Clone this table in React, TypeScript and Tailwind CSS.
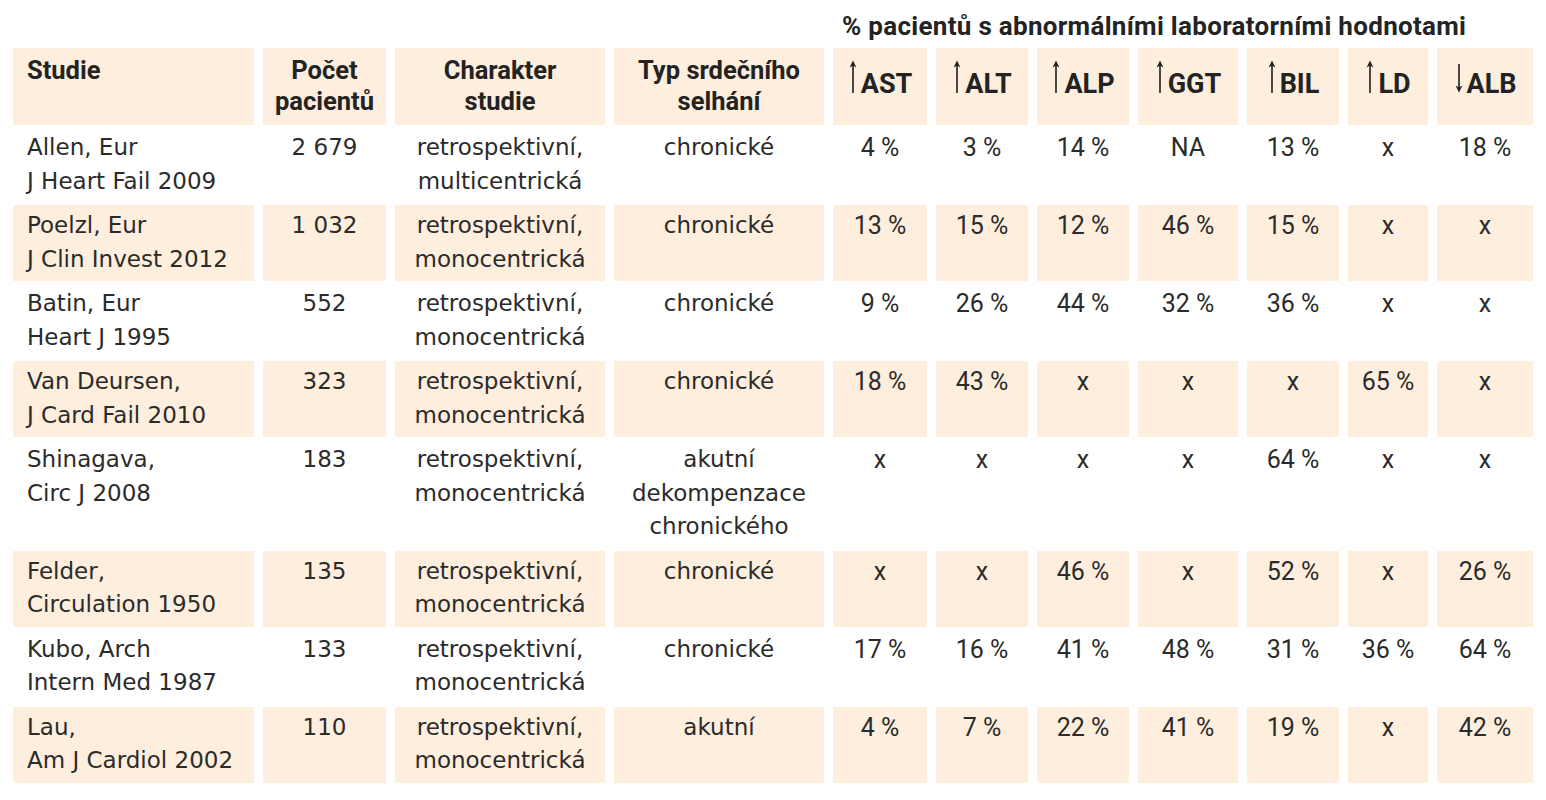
const body = "font-['DejaVu_Sans','Liberation_Sans',sans-serif]";
const narrow = "font-['Roboto','Liberation_Sans',sans-serif]";

type Row = {
  study: string[];
  count: string;
  kind: string[];
  type: string[];
  vals: string[];
};

const rows: Row[] = [
  { study: ['Allen, Eur', 'J Heart Fail 2009'], count: '2 679', kind: ['retrospektivní,', 'multicentrická'], type: ['chronické'], vals: ['4 %', '3 %', '14 %', 'NA', '13 %', 'x', '18 %'] },
  { study: ['Poelzl, Eur', 'J Clin Invest 2012'], count: '1 032', kind: ['retrospektivní,', 'monocentrická'], type: ['chronické'], vals: ['13 %', '15 %', '12 %', '46 %', '15 %', 'x', 'x'] },
  { study: ['Batin, Eur', 'Heart J 1995'], count: '552', kind: ['retrospektivní,', 'monocentrická'], type: ['chronické'], vals: ['9 %', '26 %', '44 %', '32 %', '36 %', 'x', 'x'] },
  { study: ['Van Deursen,', 'J Card Fail 2010'], count: '323', kind: ['retrospektivní,', 'monocentrická'], type: ['chronické'], vals: ['18 %', '43 %', 'x', 'x', 'x', '65 %', 'x'] },
  { study: ['Shinagava,', 'Circ J 2008'], count: '183', kind: ['retrospektivní,', 'monocentrická'], type: ['akutní', 'dekompenzace', 'chronického'], vals: ['x', 'x', 'x', 'x', '64 %', 'x', 'x'] },
  { study: ['Felder,', 'Circulation 1950'], count: '135', kind: ['retrospektivní,', 'monocentrická'], type: ['chronické'], vals: ['x', 'x', '46 %', 'x', '52 %', 'x', '26 %'] },
  { study: ['Kubo, Arch', 'Intern Med 1987'], count: '133', kind: ['retrospektivní,', 'monocentrická'], type: ['chronické'], vals: ['17 %', '16 %', '41 %', '48 %', '31 %', '36 %', '64 %'] },
  { study: ['Lau,', 'Am J Cardiol 2002'], count: '110', kind: ['retrospektivní,', 'monocentrická'], type: ['akutní'], vals: ['4 %', '7 %', '22 %', '41 %', '19 %', 'x', '42 %'] },
];

const labs: { name: string; up: boolean }[] = [
  { name: 'AST', up: true },
  { name: 'ALT', up: true },
  { name: 'ALP', up: true },
  { name: 'GGT', up: true },
  { name: 'BIL', up: true },
  { name: 'LD', up: true },
  { name: 'ALB', up: false },
];

function Arrow({ up }: { up: boolean }) {
  return (
    <svg width="10" height="33" viewBox="0 0 10 33" className="mr-[3px] shrink-0">
      {up ? (
        <>
          <path d="M5 33V3" stroke="#1f1f1f" strokeWidth="1.6" />
          <path d="M5 0.5L1.6 7.5L5 5.6L8.4 7.5Z" fill="#1f1f1f" />
        </>
      ) : (
        <>
          <path d="M5 4V30" stroke="#1f1f1f" strokeWidth="1.6" />
          <path d="M5 32.5L1.6 25.5L5 27.4L8.4 25.5Z" fill="#1f1f1f" />
        </>
      )}
    </svg>
  );
}

function Lines({ items }: { items: string[] }) {
  return (
    <>
      {items.map((t) => (
        <div key={t}>{t}</div>
      ))}
    </>
  );
}

export default function App() {
  const head = "bg-[#fdeedd] pt-[7px] text-[25.5px] leading-[31px] font-bold text-[#232323] " + narrow;
  return (
    <div className="bg-white w-[1546px] h-[800px] pl-[13px]">
      <div className="grid grid-cols-[241px_123px_210px_210px_94px_92px_92px_100px_92px_80px_96px] gap-x-[9px] gap-y-[2px] text-[#2b2b2b]">
        {/* title over lab columns */}
        <div className="col-span-4 h-[46px]" />
        <div className={"col-span-7 h-[46px] flex items-center pl-[9px] pt-[6px] text-[26px] tracking-[0.3px] font-bold text-[#232323] " + narrow}>
          % pacientů s abnormálními laboratorními hodnotami
        </div>

        {/* header row */}
        <div className={head + " pl-[14px]"}>Studie</div>
        <div className={head + " text-center"}>
          <div>Počet</div>
          <div>pacientů</div>
        </div>
        <div className={head + " text-center"}>
          <div>Charakter</div>
          <div>studie</div>
        </div>
        <div className={head + " text-center"}>
          <div>Typ srdečního</div>
          <div>selhání</div>
        </div>
        {labs.map((l) => (
          <div key={l.name} className={"bg-[#fdeedd] h-[77px] flex justify-center items-baseline pt-[12px] text-[27px] leading-none font-bold text-[#232323] " + narrow}>
            <Arrow up={l.up} />
            <span>{l.name}</span>
          </div>
        ))}

        {/* body rows */}
        {rows.map((r, i) => {
          const bg = i % 2 === 1 ? ' bg-[#fdeedd]' : '';
          const cell = 'pt-[4px] pb-[5px] text-[23px] leading-[33.5px] ' + body + bg;
          return [
            <div key={'s' + i} className={cell + ' pl-[14px]'}>
              <Lines items={r.study} />
            </div>,
            <div key={'c' + i} className={cell + ' text-center'}>{r.count}</div>,
            <div key={'k' + i} className={cell + ' text-center'}>
              <Lines items={r.kind} />
            </div>,
            <div key={'t' + i} className={cell + ' text-center'}>
              <Lines items={r.type} />
            </div>,
            ...r.vals.map((v, j) => (
              <div key={'v' + i + '-' + j} className={'pt-[4px] pb-[5px] text-[25px] leading-[33.5px] text-center text-[#2b2b2b] ' + narrow + bg}>
                {v}
              </div>
            )),
          ];
        })}
      </div>
    </div>
  );
}
